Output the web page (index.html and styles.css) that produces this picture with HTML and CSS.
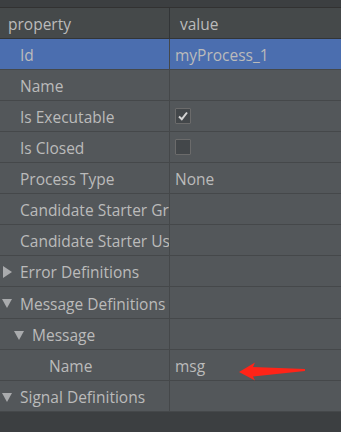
FILE: index.html
```html
<!DOCTYPE html>
<html>
<head>
<meta charset="utf-8">
<link rel="stylesheet" href="styles.css">
</head>
<body>
<div class="panel">
  <div class="topbar"></div>
  <div class="table">
    <div class="row header"><div class="cell key hdr">property</div><div class="cell val hdr">value</div></div>
    <div class="row selected"><div class="cell key l1">Id</div><div class="cell val">myProcess_1</div></div>
    <div class="row"><div class="cell key l1">Name</div><div class="cell val"></div></div>
    <div class="row"><div class="cell key l1">Is Executable</div><div class="cell val"><span class="checkbox">
      <svg width="12" height="12" viewBox="0 0 12 12"><path d="M2 6.5 L4.8 9.2 L10 2.5" fill="none" stroke="#d4d4d4" stroke-width="2"/></svg></span></div></div>
    <div class="row"><div class="cell key l1">Is Closed</div><div class="cell val"><span class="checkbox"></span></div></div>
    <div class="row"><div class="cell key l1">Process Type</div><div class="cell val">None</div></div>
    <div class="row"><div class="cell key l1">Candidate Starter Groups</div><div class="cell val"></div></div>
    <div class="row"><div class="cell key l1">Candidate Starter Users</div><div class="cell val"></div></div>
    <div class="row"><div class="cell key l0"><span class="tri right"></span>Error Definitions</div><div class="cell val"></div></div>
    <div class="row tall"><div class="cell key l0"><span class="tri down"></span>Message Definitions</div><div class="cell val"></div></div>
    <div class="row"><div class="cell key l2"><span class="tri down"></span>Message</div><div class="cell val"></div></div>
    <div class="row"><div class="cell key l3">Name</div><div class="cell val">msg</div></div>
    <div class="row"><div class="cell key l0"><span class="tri down"></span>Signal Definitions</div><div class="cell val"></div></div>
  </div>
  <div class="bottombar"></div>
  <svg class="arrow" width="70" height="24" viewBox="0 0 70 24">
    <polygon points="0,10 16,0.5 14,5 66,7 66,9 14,14.5 16,18.5" fill="#ff2418"/>
  </svg>
</div>
</body>
</html>
```
FILE: styles.css
```css
html, body {
  margin: 0;
  padding: 0;
  background: #3c3f41;
}
.panel {
  position: relative;
  width: 341px;
  height: 432px;
  overflow: hidden;
  font-family: "Open Sans", "Noto Sans", sans-serif;
  font-size: 15.5px;
  color: #bbbbbb;
  background: #3c3f41;
}
.topbar {
  height: 7px;
  background: #3c3f41;
  border-bottom: 1px solid #323232;
}
.table {
  display: flex;
  flex-direction: column;
}
.row {
  display: flex;
  height: 30px;
  background: #53575a;
  border-bottom: 1px solid #45484a;
}
.row.tall { height: 31px; }
.row.header {
  background: #45494a;
  height: 30px;
  border-bottom: 1px solid #323537;
}
.row.selected {
  background: #4b6eaf;
}
.cell {
  display: flex;
  align-items: center;
  white-space: nowrap;
  overflow: hidden;
  padding-top: 2px;
}
.key {
  width: 169px;
  flex: none;
  border-right: 1px solid #45484a;
}
.header .key { border-right-color: #323537; }
.val {
  flex: 1;
  padding-left: 5px;
}
.hdr.key { padding-left: 8px; width: 161px; }
.hdr.val { padding-left: 10px; }
.l0 { padding-left: 3px; width: 166px; }
.l1 { padding-left: 20px; width: 149px; }
.l2 { padding-left: 15px; width: 154px; }
.l3 { padding-left: 49px; width: 120px; }
.tri {
  display: inline-block;
  width: 0;
  height: 0;
  flex: none;
}
.tri.right {
  border-top: 6px solid transparent;
  border-bottom: 6px solid transparent;
  border-left: 9px solid #a9abad;
  margin-right: 8px;
}
.tri.down {
  border-left: 5px solid transparent;
  border-right: 5px solid transparent;
  border-top: 9px solid #a9abad;
  margin-left: -1px;
  margin-right: 8px;
}
.checkbox {
  display: inline-flex;
  align-items: center;
  justify-content: center;
  width: 14px;
  height: 14px;
  margin-top: -2px;
  border: 1px solid #6b6b6b;
  background: #43474a;
  border-radius: 1px;
}
.bottombar {
  flex: 1;
}
.arrow {
  position: absolute;
  left: 239px;
  top: 362px;
}
```
